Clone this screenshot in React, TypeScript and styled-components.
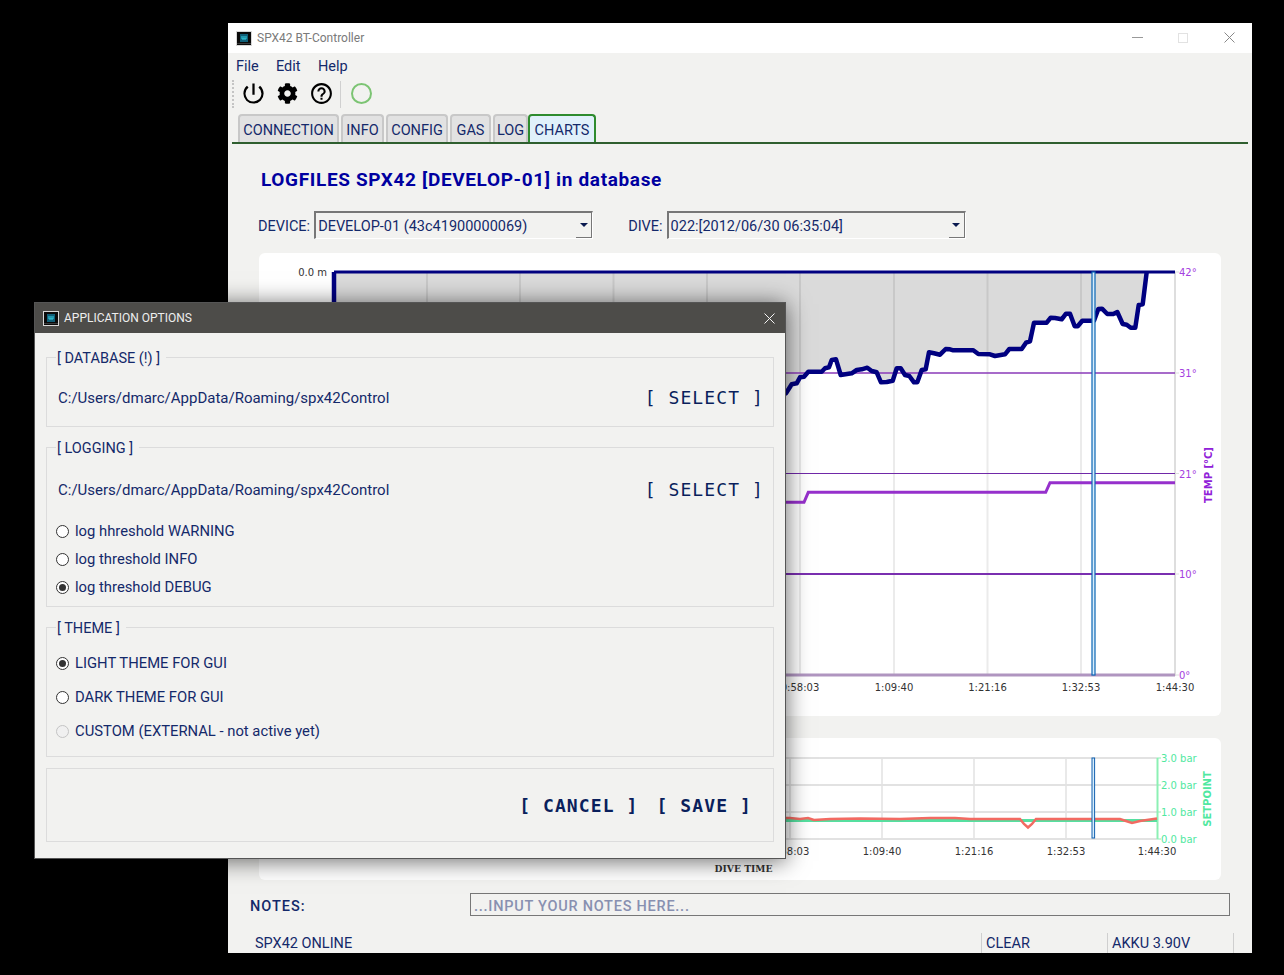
import React from 'react'
import styled, { createGlobalStyle } from 'styled-components'
import { FaCog } from 'react-icons/fa'
import { MdHelpOutline, MdPowerSettingsNew } from 'react-icons/md'

const INK = '#14296a'
const PANEL = '#f2f2f0'

const GlobalStyle = createGlobalStyle`
  html, body {
    margin: 0;
    height: 975px;
    background: #000;
    overflow: hidden;
    font-family: Roboto, "Noto Sans", sans-serif;
    color: ${INK};
  }
`

// depth profile, page coordinates (the part left of the dialog is hidden anyway)
const depthPoints = [
  [334, 272], [334, 470], [600, 450], [786, 393.3], [791.7, 384.3], [796.7, 383.3], [800, 377.3], [804, 376.7],
  [808.3, 371.7], [821.7, 371.7], [825, 368.3], [829, 367.3], [831.7, 360], [836, 359.3], [840.7, 375],
  [851.7, 373.3], [856.7, 370], [861.7, 369.3], [867.3, 367.7], [871.7, 371], [876.7, 372.3], [881, 382.3],
  [886.7, 382], [892.7, 380.7], [896.7, 368.3], [900.7, 368.3], [905, 375], [909.3, 376], [914, 382.3],
  [917.3, 382.3], [921.7, 370], [925.7, 369.3], [929, 352.3], [934, 353.3], [940, 354.7], [945.7, 349],
  [950, 349.3], [953.3, 350.3], [973.3, 350.3], [978.3, 354], [990, 354.3], [995, 356], [1005, 354.3],
  [1009.3, 349], [1021.7, 349], [1026, 342.7], [1030, 341.3], [1034, 322.7], [1046.7, 322.7], [1050.7, 317.7],
  [1055, 318], [1061.7, 319.3], [1066, 313.7], [1070, 313.7], [1074.7, 326.3], [1077.7, 326.3], [1082.3, 320.7],
  [1094, 320.7], [1098.3, 309], [1102, 308.7], [1107.3, 314], [1113.3, 314], [1117.3, 312], [1122.7, 324],
  [1126.7, 324.7], [1130.7, 327.7], [1135.3, 327.7], [1138.7, 305], [1142.7, 304.3], [1146.7, 272],
]
const depthLine = depthPoints.map(p => p.join(',')).join(' ')

const tempLine = '334,560 700,502.3 804,502.3 808.3,492.3 1045.7,492.3 1050,482.7 1175,482.7'
const setpointLine = '600,820.5 1157,820.5'
const ppoLine =
  '600,818.5 790,818 800,819 808,818 814,820 830,819 860,818.5 900,819 930,818 955,818 970,819 1020,819 1024,824 1028,827.5 1032,824 1036,819 1080,819 1120,819 1126,821 1132,823 1140,821 1157,818.5'

const topGrid = [427, 520, 613.5, 707, 800, 894, 987.5, 1081]
const topTemps = [
  { y: 272, label: '42°', width: 1, color: '#7a2fb0' },
  { y: 373, label: '31°', width: 1.5, color: '#8a3ab8' },
  { y: 473.5, label: '21°', width: 1, color: '#7028a8' },
  { y: 574, label: '10°', width: 2, color: '#7a2fb0' },
  { y: 675, label: '0°', width: 3, color: '#b095c0' },
]
const timeTicks = [
  { x: 800, label: '0:58:03' },
  { x: 894, label: '1:09:40' },
  { x: 987.5, label: '1:21:16' },
  { x: 1081, label: '1:32:53' },
  { x: 1175, label: '1:44:30' },
]

const bottomGrid = [790, 882, 974, 1066]
const bars = [
  { y: 758, label: '3.0 bar' },
  { y: 785, label: '2.0 bar' },
  { y: 812, label: '1.0 bar' },
  { y: 839, label: '0.0 bar' },
]
const bottomTicks = [
  { x: 790, label: '0:58:03' },
  { x: 882, label: '1:09:40' },
  { x: 974, label: '1:21:16' },
  { x: 1066, label: '1:32:53' },
  { x: 1157, label: '1:44:30' },
]

const AppIcon = ({ size = 16 }: { size?: number }) => (
  <svg width={size} height={size - 1} viewBox="0 0 16 15">
    <rect x="0" y="0" width="16" height="15" fill="#d8d8d8" />
    <rect x="1" y="1" width="14" height="13" fill="#0b0b0b" />
    <rect x="4" y="3" width="8" height="8" fill="#0f5f78" />
    <path d="M6 5v3h4V5M8 5v3" fill="none" stroke="#39d0e0" strokeWidth="1" />
    <path d="M1 12.5h14" stroke="#3a3a3a" strokeWidth="1" />
  </svg>
)

const App = () => (
  <>
    <GlobalStyle />
    <MainWindow>
      <TitleBar>
        <AppIcon />
        <TitleText>SPX42 BT-Controller</TitleText>
        <WindowButtons>
          <svg width="11" height="11" viewBox="0 0 11 11">
            <path d="M0 5.5h11" stroke="#999" />
          </svg>
          <svg width="11" height="11" viewBox="0 0 11 11">
            <rect x="0.5" y="1.5" width="9" height="9" fill="none" stroke="#e2e2e2" />
          </svg>
          <svg width="11" height="11" viewBox="0 0 11 11">
            <path d="M0.5 0.5l10 10M10.5 0.5l-10 10" stroke="#888" />
          </svg>
        </WindowButtons>
      </TitleBar>

      <MenuBar>
        <MenuItem $w={40}>File</MenuItem>
        <MenuItem $w={42}>Edit</MenuItem>
        <MenuItem $w={40}>Help</MenuItem>
      </MenuBar>

      <Toolbar>
        <Grip />
        <ToolButton>
          <MdPowerSettingsNew size={27} />
        </ToolButton>
        <ToolButton>
          <FaCog size={21} />
        </ToolButton>
        <ToolButton>
          <MdHelpOutline size={25} />
        </ToolButton>
        <ToolSeparator />
        <StatusRing />
      </Toolbar>

      <TabStrip>
        <Tab $w={101}>CONNECTION</Tab>
        <Tab $w={43}>INFO</Tab>
        <Tab $w={62}>CONFIG</Tab>
        <Tab $w={41}>GAS</Tab>
        <Tab $w={35}>LOG</Tab>
        <Tab $w={68} $active>
          CHARTS
        </Tab>
      </TabStrip>

      <Heading>LOGFILES SPX42 [DEVELOP-01] in database</Heading>

      <SelectRow>
        <SelectLabel>DEVICE:</SelectLabel>
        <Combo $w={279}>
          <ComboText>DEVELOP-01 (43c41900000069)</ComboText>
          <ComboArrow />
        </Combo>
        <SelectLabel $gap={35}>DIVE:</SelectLabel>
        <Combo $w={299}>
          <ComboText>022:[2012/06/30 06:35:04]</ComboText>
          <ComboArrow />
        </Combo>
      </SelectRow>

      <ChartCard $h={463}>
        <ChartSvg viewBox="259 253 962 463" width="962" height="463">
          <polygon points={`${depthLine} 1146.7,272`} fill="#dadada" />
          {topGrid.map(x => (
            <line key={x} x1={x} x2={x} y1={272} y2={675} stroke="rgba(0,0,0,0.08)" strokeWidth="2" />
          ))}
          <line x1={1175} x2={1175} y1={272} y2={676} stroke="#dedede" strokeWidth="2" />
          {topTemps.map(t => (
            <g key={t.y}>
              <line x1={334} x2={1175} y1={t.y} y2={t.y} stroke={t.color} strokeWidth={t.width} />
              <line x1={1175} x2={1179} y1={t.y} y2={t.y} stroke="#dedede" />
              <TempLabel x={1179} y={t.y + 4}>
                {t.label}
              </TempLabel>
            </g>
          ))}
          <polyline points={tempLine} fill="none" stroke="#9630cc" strokeWidth="3" />
          <polyline points={depthLine} fill="none" stroke="#000080" strokeWidth="4.5" strokeLinejoin="round" />
          <line x1={334} x2={1175} y1={272} y2={272} stroke="#000080" strokeWidth="3" />
          <rect x={1092} y={272} width={3} height={403} fill="#d8ecfa" stroke="#0a66b5" strokeWidth="1.2" />
          <AxisLabel x={327} y={276} textAnchor="end">
            0.0 m
          </AxisLabel>
          {timeTicks.map(t => (
            <AxisLabel key={t.x} x={t.x} y={691} textAnchor="middle">
              {t.label}
            </AxisLabel>
          ))}
          <TempTitle transform="translate(1212 475) rotate(-90)" textAnchor="middle">
            TEMP [°C]
          </TempTitle>
        </ChartSvg>
      </ChartCard>

      <ChartCard $h={142} $top={22}>
        <ChartSvg viewBox="259 738 962 142" width="962" height="142">
          {bars.map(b => (
            <g key={b.y}>
              <line x1={600} x2={1157} y1={b.y} y2={b.y} stroke="#e2e2e2" strokeWidth="2" />
              <line x1={1157} x2={1161} y1={b.y} y2={b.y} stroke="#8cf0b4" />
              <BarLabel x={1161} y={b.y + 4}>
                {b.label}
              </BarLabel>
            </g>
          ))}
          {bottomGrid.map(x => (
            <line key={x} x1={x} x2={x} y1={758} y2={839} stroke="#e2e2e2" strokeWidth="1.5" />
          ))}
          <line x1={1157.5} x2={1157.5} y1={758} y2={839} stroke="#8cf0b4" strokeWidth="2" />
          <polyline points={setpointLine} fill="none" stroke="#55e0a0" strokeWidth="3" />
          <polyline points={ppoLine} fill="none" stroke="#f26a62" strokeWidth="2.5" />
          <rect x={1092} y={758} width={2.6} height={80} fill="#d8ecfa" stroke="#1060b0" strokeWidth="1" />
          {bottomTicks.map(t => (
            <AxisLabel key={t.x} x={t.x} y={855} textAnchor="middle">
              {t.label}
            </AxisLabel>
          ))}
          <AxisTitle x={743.5} y={872} textAnchor="middle">
            DIVE TIME
          </AxisTitle>
          <SetpointTitle transform="translate(1211 799) rotate(-90)" textAnchor="middle">
            SETPOINT
          </SetpointTitle>
        </ChartSvg>
      </ChartCard>

      <NotesRow>
        <NotesLabel>NOTES:</NotesLabel>
        <NotesInput>...INPUT YOUR NOTES HERE...</NotesInput>
      </NotesRow>

      <StatusBar>
        <StatusCell $w={726}>SPX42 ONLINE</StatusCell>
        <StatusCell $w={126} $divided>
          CLEAR
        </StatusCell>
        <StatusCell $w={127} $divided $closed>
          AKKU 3.90V
        </StatusCell>
      </StatusBar>
    </MainWindow>

    <Dialog>
      <DialogTitle>
        <AppIcon />
        <DialogTitleText>APPLICATION OPTIONS</DialogTitleText>
        <svg width="11" height="11" viewBox="0 0 11 11">
          <path d="M0.5 0.5l10 10M10.5 0.5l-10 10" stroke="#f4f4f4" />
        </svg>
      </DialogTitle>

      <DialogBody>
        <Group $h={81}>
          <GroupTitle>[ DATABASE (!) ]</GroupTitle>
          <PathRow $top={18}>
            <PathText>C:/Users/dmarc/AppData/Roaming/spx42Control</PathText>
            <SelectButton>[ SELECT ]</SelectButton>
          </PathRow>
        </Group>

        <Group $h={171}>
          <GroupTitle>[ LOGGING ]</GroupTitle>
          <PathRow $top={20}>
            <PathText>C:/Users/dmarc/AppData/Roaming/spx42Control</PathText>
            <SelectButton>[ SELECT ]</SelectButton>
          </PathRow>
          <RadioList $top={21} $gap={28}>
            <RadioRow>
              <RadioDot />
              log hhreshold WARNING
            </RadioRow>
            <RadioRow>
              <RadioDot />
              log threshold INFO
            </RadioRow>
            <RadioRow>
              <RadioDot $checked />
              log threshold DEBUG
            </RadioRow>
          </RadioList>
        </Group>

        <Group $h={141}>
          <GroupTitle>[ THEME ]</GroupTitle>
          <RadioList $top={15} $gap={34}>
            <RadioRow>
              <RadioDot $checked />
              LIGHT THEME FOR GUI
            </RadioRow>
            <RadioRow>
              <RadioDot />
              DARK THEME FOR GUI
            </RadioRow>
            <RadioRow>
              <RadioDot $disabled />
              CUSTOM (EXTERNAL - not active yet)
            </RadioRow>
          </RadioList>
        </Group>

        <ButtonBox>
          <DialogButton>[ CANCEL ]</DialogButton>
          <DialogButton>[ SAVE ]</DialogButton>
        </ButtonBox>
      </DialogBody>
    </Dialog>
  </>
)

export default App

const MainWindow = styled.div`
  position: absolute;
  left: 228px;
  top: 23px;
  width: 1024px;
  height: 930px;
  overflow: hidden;
  background: ${PANEL};
  display: flex;
  flex-direction: column;
`

const TitleBar = styled.div`
  flex: none;
  height: 30px;
  background: #fff;
  display: flex;
  align-items: center;
  padding-left: 8px;
`

const TitleText = styled.span`
  margin-left: 5px;
  font-size: 12px;
  color: #7a7a7a;
`

const WindowButtons = styled.div`
  margin-left: auto;
  margin-right: 17px;
  margin-bottom: 2px;
  display: flex;
  gap: 35px;
`

const MenuBar = styled.div`
  flex: none;
  height: 25px;
  display: flex;
  align-items: center;
  padding-left: 8px;
`

const MenuItem = styled.span<{ $w: number }>`
  width: ${p => p.$w}px;
  font-size: 14.5px;
  padding-top: 1px;
`

const Toolbar = styled.div`
  flex: none;
  height: 32px;
  display: flex;
  align-items: center;
  padding-left: 4px;
`

const Grip = styled.div`
  width: 0;
  height: 28px;
  border-left: 2px dotted #c4c4c4;
  margin-right: 2px;
`

const ToolButton = styled.div`
  width: 34px;
  height: 30px;
  margin-bottom: 1px;
  display: flex;
  align-items: center;
  justify-content: center;
  color: #000;
`

const ToolSeparator = styled.div`
  width: 1px;
  height: 27px;
  background: #d0d0d0;
  margin: 0 10px 0 2px;
`

const StatusRing = styled.div`
  width: 17px;
  height: 17px;
  margin-bottom: 2px;
  border: 2px solid #7cc473;
  border-radius: 50%;
`

const TabStrip = styled.div`
  flex: none;
  margin: 4px 4px 0;
  padding-left: 6px;
  height: 28px;
  display: flex;
  gap: 2px;
  border-bottom: 2px solid #2f5f2f;
`

const Tab = styled.div<{ $w: number; $active?: boolean }>`
  box-sizing: border-box;
  width: ${p => p.$w}px;
  height: 28px;
  margin-left: ${p => (p.$active ? '-2px' : '0')};
  padding-top: 2px;
  display: flex;
  align-items: center;
  justify-content: center;
  font-size: 14.5px;
  border: 2px solid ${p => (p.$active ? '#2e8b2e' : '#c8c8c8')};
  border-bottom: none;
  border-radius: 4px 4px 0 0;
  background: ${p => (p.$active ? '#e0f0fa' : '#e2e2e2')};
`

const Heading = styled.h1`
  flex: none;
  margin: 24px 0 0 33px;
  font-size: 19px;
  letter-spacing: 0.65px;
  line-height: 24px;
  font-weight: 700;
  color: #0000a0;
`

const SelectRow = styled.div`
  flex: none;
  margin-top: 19px;
  padding-left: 30px;
  height: 28px;
  display: flex;
  align-items: center;
`

const SelectLabel = styled.span<{ $gap?: number }>`
  font-size: 14.5px;
  padding-top: 2px;
  margin-left: ${p => p.$gap || 0}px;
  margin-right: 4px;
`

const Combo = styled.div<{ $w: number }>`
  box-sizing: border-box;
  width: ${p => p.$w}px;
  height: 28px;
  display: flex;
  align-items: center;
  justify-content: space-between;
  border: 1px solid #fff;
  border-top: 2px solid #777;
  border-left: 2px solid #777;
  background: ${PANEL};
  padding-left: 2px;
`

const ComboText = styled.span`
  font-size: 14.5px;
  padding-top: 2px;
`

const ComboArrow = styled.div`
  box-sizing: border-box;
  width: 16px;
  height: 25px;
  background: ${PANEL};
  border-right: 1px solid #777;
  border-bottom: 1px solid #777;
  display: flex;
  align-items: center;
  justify-content: center;
  &::after {
    content: '';
    border-left: 4px solid transparent;
    border-right: 4px solid transparent;
    border-top: 4px solid #0a1a50;
  }
`

const ChartCard = styled.div<{ $h: number; $top?: number }>`
  flex: none;
  margin: ${p => p.$top ?? 14}px 31px 0;
  height: ${p => p.$h}px;
  background: #fff;
  border-radius: 6px;
`

const ChartSvg = styled.svg`
  display: block;
`

const AxisLabel = styled.text`
  font-family: "DejaVu Sans", sans-serif;
  font-size: 10px;
  fill: #333;
`

const AxisTitle = styled.text`
  font-family: "DejaVu Serif", serif;
  font-size: 9.2px;
  font-weight: 700;
  fill: #333;
`

const TempLabel = styled.text`
  font-family: "DejaVu Sans", sans-serif;
  font-size: 10px;
  fill: #a440e0;
`

const TempTitle = styled.text`
  font-family: "DejaVu Sans", sans-serif;
  font-size: 10px;
  font-weight: 700;
  fill: #9020d8;
`

const BarLabel = styled.text`
  font-family: "DejaVu Sans", sans-serif;
  font-size: 10px;
  fill: #50e8a0;
`

const SetpointTitle = styled.text`
  font-family: "DejaVu Sans", sans-serif;
  font-size: 10px;
  font-weight: 700;
  fill: #50e8a0;
`

const NotesRow = styled.div`
  flex: none;
  margin-top: 13px;
  padding-left: 22px;
  height: 23px;
  display: flex;
  align-items: center;
`

const NotesLabel = styled.span`
  width: 220px;
  padding-top: 3px;
  font-size: 14.5px;
  font-weight: 500;
  letter-spacing: 1px;
`

const NotesInput = styled.div`
  box-sizing: border-box;
  width: 760px;
  height: 23px;
  border: 1px solid #777;
  padding: 2px 0 0 3px;
  font-size: 14.5px;
  font-weight: 500;
  letter-spacing: 0.75px;
  line-height: 22px;
  color: #8890b0;
`

const StatusBar = styled.div`
  flex: none;
  margin-top: 17px;
  height: 20px;
  padding-left: 27px;
  display: flex;
`

const StatusCell = styled.div<{ $w: number; $divided?: boolean; $closed?: boolean }>`
  box-sizing: border-box;
  width: ${p => p.$w}px;
  padding-left: ${p => (p.$divided ? 4 : 0)}px;
  font-size: 14.5px;
  line-height: 22px;
  border-left: ${p => (p.$divided ? '1px solid #cfcfcf' : 'none')};
  border-right: ${p => (p.$closed ? '1px solid #cfcfcf' : 'none')};
`

const Dialog = styled.div`
  position: absolute;
  left: 34px;
  top: 302px;
  width: 752px;
  height: 557px;
  box-sizing: border-box;
  border: 1px solid #555;
  background: ${PANEL};
  box-shadow: 0 2px 22px rgba(0, 0, 0, 0.6);
  display: flex;
  flex-direction: column;
`

const DialogTitle = styled.div`
  flex: none;
  height: 30px;
  background: #4d4c49;
  display: flex;
  align-items: center;
  padding: 0 10px 0 8px;
`

const DialogTitleText = styled.span`
  margin-left: 5px;
  margin-right: auto;
  padding-bottom: 1px;
  font-size: 12px;
  color: #eee;
`

const DialogBody = styled.div`
  flex: 1;
  display: flex;
  flex-direction: column;
  gap: 9px;
  padding: 13px 11px 0;
`

const Group = styled.fieldset<{ $h: number }>`
  box-sizing: border-box;
  height: ${p => p.$h}px;
  margin: 0;
  min-width: 0;
  padding: 0 11px;
  border: 1px solid #dcdcdc;
`

const GroupTitle = styled.legend`
  margin-left: -2px;
  padding: 4px 6px 0 1px;
  font-size: 14.5px;
  line-height: 18px;
`

const PathRow = styled.div<{ $top: number }>`
  margin-top: ${p => p.$top}px;
  height: 22px;
  display: flex;
  align-items: center;
  justify-content: space-between;
`

const PathText = styled.span`
  font-size: 15px;
  padding-top: 1px;
`

const SelectButton = styled.span`
  font-family: "DejaVu Sans Mono", monospace;
  font-size: 18px;
  letter-spacing: 1.1px;
  margin-right: -2px;
  white-space: pre;
  color: #0a1f5c;
`

const RadioList = styled.div<{ $top: number; $gap: number }>`
  margin-top: ${p => p.$top}px;
  display: flex;
  flex-direction: column;
  gap: ${p => p.$gap - 20}px;
`

const RadioRow = styled.label`
  height: 20px;
  margin-left: -2px;
  display: flex;
  align-items: center;
  gap: 6px;
  font-size: 14.8px;
`

const RadioDot = styled.span<{ $checked?: boolean; $disabled?: boolean }>`
  box-sizing: border-box;
  width: 13px;
  height: 13px;
  border-radius: 50%;
  border: 1px solid ${p => (p.$disabled ? '#c4c4c4' : '#333')};
  background: ${p => (p.$disabled ? '#f0f0f0' : '#fff')};
  display: flex;
  align-items: center;
  justify-content: center;
  &::after {
    content: '';
    display: ${p => (p.$checked ? 'block' : 'none')};
    width: 7px;
    height: 7px;
    border-radius: 50%;
    background: #333;
  }
`

const ButtonBox = styled.div`
  box-sizing: border-box;
  height: 74px;
  margin-top: 2px;
  border: 1px solid #dcdcdc;
  display: flex;
  align-items: center;
  justify-content: flex-end;
  gap: 18px;
  padding: 0 21px 0 0;
`

const DialogButton = styled.span`
  font-family: "DejaVu Sans Mono", monospace;
  font-size: 18px;
  font-weight: 700;
  letter-spacing: 1.1px;
  color: #0a1f5c;
`
